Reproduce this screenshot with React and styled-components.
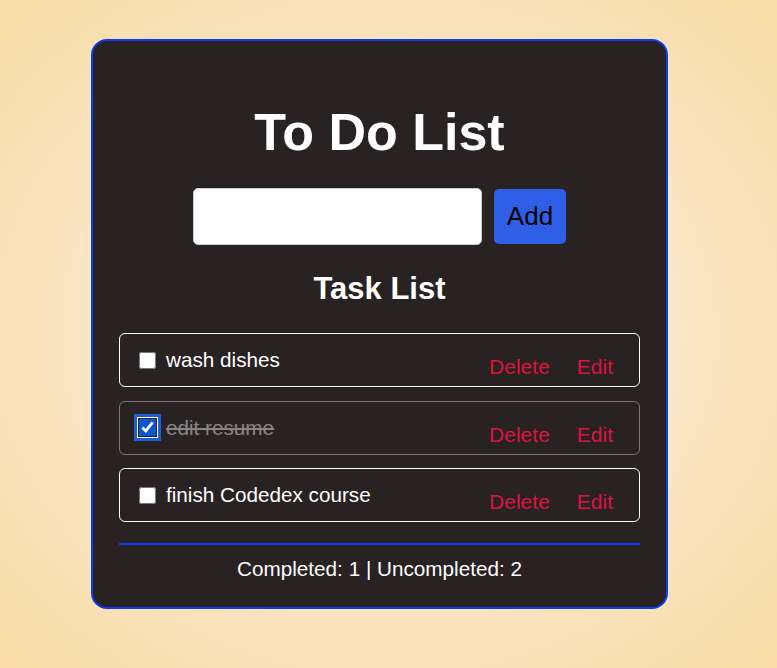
import React, { useState } from 'react';
import styled, { createGlobalStyle } from 'styled-components';

const GlobalStyles = createGlobalStyle`
  html, body {
    margin: 0;
    padding: 0;
    height: 100%;
  }
  body {
    font-family: "Liberation Sans", Arial, sans-serif;
    background: radial-gradient(ellipse at center, #fdf6ea 0%, #f9e6c4 55%, #f8dba5 100%);
    min-height: 668px;
  }
`;

const Page = styled.div`
  display: flex;
  justify-content: center;
  padding-top: 39px;
  padding-right: 18px;
`;

const Card = styled.div`
  width: 577px;
  box-sizing: border-box;
  background-color: #292223;
  border: 2px solid #0a3cf5;
  border-radius: 16px;
  padding: 50px 26px 26px;
  color: white;
  text-align: center;
`;

const Title = styled.h1`
  font-size: 52px;
  font-weight: bold;
  margin: 13px 0 27px;
  line-height: 1.1;
`;

const InputRow = styled.div`
  display: flex;
  justify-content: center;
  align-items: center;
  gap: 12px;
`;

const TaskInput = styled.input`
  width: 289px;
  height: 57px;
  box-sizing: border-box;
  border: 1px solid #ccc;
  border-radius: 5px;
  background: white;
  font-size: 20px;
  padding: 0 10px;
`;

const AddButton = styled.button`
  width: 72px;
  height: 55px;
  border: none;
  border-radius: 5px;
  background-color: #2f5fe6;
  color: black;
  font-family: "Liberation Sans", Arial, sans-serif;
  font-size: 26px;
  cursor: pointer;
`;

const SubTitle = styled.h2`
  font-size: 31px;
  font-weight: bold;
  margin: 26px 0 26px;
`;

const List = styled.ul`
  list-style: none;
  margin: 0;
  padding: 0;
  display: flex;
  flex-direction: column;
  gap: 13.5px;
`;

const Item = styled.li`
  display: flex;
  align-items: center;
  height: 54px;
  box-sizing: border-box;
  border: 1px solid ${({ $done }) => ($done ? '#7a7474' : '#ffffff')};
  border-radius: 6px;
  padding: 0 26px 0 19px;
  font-size: 20.7px;
`;

const Check = styled.input`
  width: 17px;
  height: 17px;
  margin: 0 10px 0 0;
  accent-color: #0b57d0;
  ${({ checked }) =>
    checked &&
    `
    border-radius: 3px;
    box-shadow: 0 0 0 1px #292223, 0 0 0 2px #ffffff, 0 0 0 5px #1a5fd6;
  `}
`;

const TaskText = styled.span`
  flex: 1;
  text-align: left;
  color: ${({ $done }) => ($done ? '#8a8585' : '#ffffff')};
  text-decoration: ${({ $done }) => ($done ? 'line-through' : 'none')};
`;

const ActionButton = styled.button`
  background: none;
  border: none;
  padding: 0;
  margin: 14px 0 0 27px;
  color: #dc143c;
  font-family: "Liberation Sans", Arial, sans-serif;
  font-size: 21px;
  cursor: pointer;
`;

const Divider = styled.hr`
  border: none;
  border-top: 2px solid #0a3cf5;
  margin: 21px 0 12px;
`;

const Summary = styled.p`
  font-size: 20.7px;
  margin: 0;
`;

const App = () => {
  const [tasks, setTasks] = useState([
    { text: 'wash dishes', done: false },
    { text: 'edit resume', done: true },
    { text: 'finish Codedex course', done: false },
  ]);

  const toggle = (i) => {
    setTasks(tasks.map((t, j) => (j === i ? { ...t, done: !t.done } : t)));
  };

  const completed = tasks.filter((t) => t.done).length;

  return (
    <Page>
      <GlobalStyles />
      <Card>
        <Title>To Do List</Title>
        <InputRow>
          <TaskInput type="text" />
          <AddButton>Add</AddButton>
        </InputRow>
        <SubTitle>Task List</SubTitle>
        <List>
          {tasks.map((task, i) => (
            <Item key={i} $done={task.done}>
              <Check type="checkbox" checked={task.done} onChange={() => toggle(i)} />
              <TaskText $done={task.done}>{task.text}</TaskText>
              <ActionButton>Delete</ActionButton>
              <ActionButton>Edit</ActionButton>
            </Item>
          ))}
        </List>
        <Divider />
        <Summary>
          Completed: {completed} | Uncompleted: {tasks.length - completed}
        </Summary>
      </Card>
    </Page>
  );
};

export default App;
